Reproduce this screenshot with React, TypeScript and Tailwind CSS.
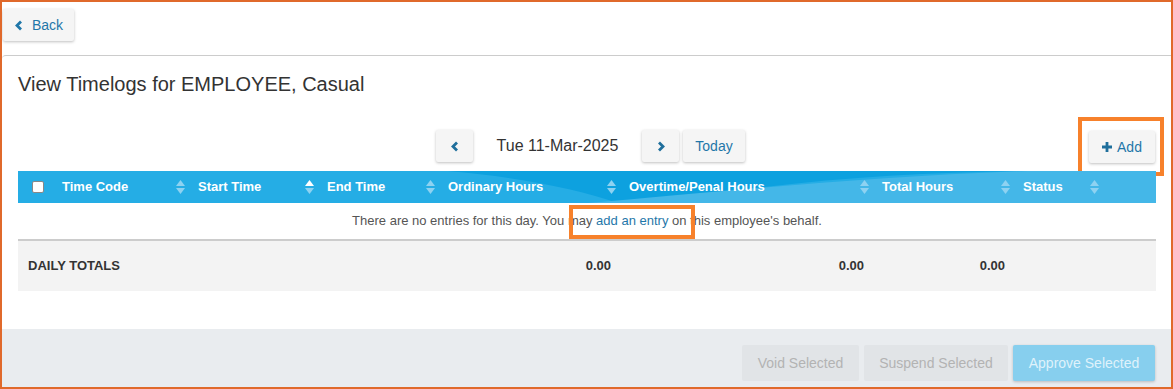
import React from 'react'

const font = "font-['Liberation_Sans',Arial,sans-serif]"

function Chevron({ dir, className }: { dir: 'left' | 'right'; className?: string }) {
  return (
    <svg width="8" height="11" viewBox="0 0 8 11" className={className}>
      <polyline
        points={dir === 'left' ? '6,1.5 2,5.5 6,9.5' : '2,1.5 6,5.5 2,9.5'}
        fill="none"
        stroke="currentColor"
        strokeWidth="2.8"
        strokeLinejoin="miter"
      />
    </svg>
  )
}

function SortIcon({ active }: { active?: boolean }) {
  return (
    <svg width="9" height="14" viewBox="0 0 9 14">
      <path d="M4.5 0 L9 6 H0 Z" fill={active ? '#ffffff' : '#8ed2f1'} />
      <path d="M4.5 14 L9 8 H0 Z" fill="#8ed2f1" />
    </svg>
  )
}

const columns = [
  { label: 'Time Code', w: 'w-[136px]' },
  { label: 'Start Time', w: 'w-[129px]', active: true },
  { label: 'End Time', w: 'w-[121px]' },
  { label: 'Ordinary Hours', w: 'w-[181px]' },
  { label: 'Overtime/Penal Hours', w: 'w-[253px]' },
  { label: 'Total Hours', w: 'w-[141px]' },
  { label: 'Status', w: 'w-[89px]' },
]

export default function App() {
  return (
    <div className={`flex h-[389px] w-[1173px] flex-col overflow-hidden border-2 border-[#e0692b] bg-white ${font}`}>
      {/* top bar */}
      <div className="h-[53px] shrink-0 pl-[1px] pt-[7px]">
        <button className="flex h-[32px] w-[71px] items-center gap-[9px] rounded-[2px] bg-[#f5f5f5] pl-[12px] text-[14px] text-[#1f77a9] shadow-[0_1px_3px_rgba(0,0,0,0.25)]">
          <Chevron dir="left" />
          Back
        </button>
      </div>

      <div className="h-[274px] shrink-0 rounded-tl-[4px] border-t border-[#cccccc] px-[16px] pt-[14px]">
        <h1 className="h-[28px] text-[20px] leading-[28px] text-[#333333]">View Timelogs for EMPLOYEE, Casual</h1>

        <div className="mt-[32px] flex h-[33px] items-start">
          <div className="ml-[418px] flex items-center">
            <button className="flex h-[32px] w-[37px] items-center justify-center rounded-[2px] bg-[#f5f5f5] text-[#1f6f9c] shadow-[0_1px_3px_rgba(0,0,0,0.25)]">
              <Chevron dir="left" />
            </button>
            <span className="w-[169px] text-center text-[16px] text-[#333333]">Tue 11-Mar-2025</span>
            <button className="flex h-[32px] w-[37px] items-center justify-center rounded-[2px] bg-[#f5f5f5] text-[#1f6f9c] shadow-[0_1px_3px_rgba(0,0,0,0.25)]">
              <Chevron dir="right" />
            </button>
            <button className="ml-[4px] h-[32px] w-[62px] rounded-[2px] bg-[#f5f5f5] text-[14px] text-[#1f77a9] shadow-[0_1px_3px_rgba(0,0,0,0.25)]">
              Today
            </button>
          </div>
          <div className="relative ml-auto mt-[1px]">
            <button className="flex h-[32px] w-[66px] items-center justify-center gap-[5px] rounded-[2px] bg-[#f5f5f5] text-[14px] text-[#1f77a9] shadow-[0_1px_3px_rgba(0,0,0,0.25)]">
              <svg width="10" height="10" viewBox="0 0 10 10">
                <path d="M3.6 0 H6.4 V3.6 H10 V6.4 H6.4 V10 H3.6 V6.4 H0 V3.6 H3.6 Z" fill="#1f6f9c" />
              </svg>
              Add
            </button>
            <div className="pointer-events-none absolute -bottom-[13px] -left-[11px] -right-[9px] -top-[14px] border-4 border-[#f7812b]" />
          </div>
        </div>

        {/* table */}
        <div className="mt-[8px] w-[1138px]">
          <div className="relative flex h-[32px] items-center overflow-hidden bg-[#25ade5] text-[13px] font-bold text-white">
            <svg viewBox="0 0 1138 32" preserveAspectRatio="none" className="absolute inset-0 h-full w-full">
              <path d="M430 0 H1000 C 880 2, 760 10, 640 32 H 600 C 560 18, 500 6, 430 0 Z" fill="#0da1df" />
              <path d="M570 32 C 690 22, 840 6, 1010 0 H1138 V32 Z" fill="#44b7e8" />
            </svg>
            <div className="relative flex w-[36px] justify-end pr-[10px]">
              <span className="block h-[12px] w-[12px] rounded-[2px] border border-[#888888] bg-white" />
            </div>
            {columns.map((c) => (
              <div key={c.label} className={`relative flex items-center justify-between pl-[8px] pr-[5px] ${c.w}`}>
                <span>{c.label}</span>
                <SortIcon active={c.active} />
              </div>
            ))}
          </div>

          <div className="flex h-[36px] items-center justify-center text-[13px] text-[#555555]">
            <span>
              There are no entries for this day. You may{' '}
              <span className="relative text-[#1f77a9]">
                add an entry
                <span className="pointer-events-none absolute -bottom-[11px] -left-[27px] -right-[27px] -top-[8px] border-4 border-[#f7812b]" />
              </span>{' '}
              on this employee&apos;s behalf.
            </span>
          </div>

          <div className="flex h-[52px] items-center border-t-2 border-[#cccccc] bg-[#f3f3f3] text-[13px] font-bold text-[#333333]">
            <div className="w-[422px] pl-[10px]">DAILY TOTALS</div>
            <div className="w-[181px] pr-[10px] text-right">0.00</div>
            <div className="w-[253px] pr-[10px] text-right">0.00</div>
            <div className="w-[141px] pr-[10px] text-right">0.00</div>
          </div>
        </div>
      </div>

      {/* footer */}
      <div className="flex flex-1 items-start justify-end gap-[5px] bg-[#e9ecef] pr-[16px] pt-[16px] text-[14px]">
        <button className="h-[36px] w-[117px] rounded-[2px] bg-[#e1e4e7] text-[#b3b3b3]">Void Selected</button>
        <button className="h-[36px] w-[144px] rounded-[2px] bg-[#e1e4e7] text-[#b3b3b3]">Suspend Selected</button>
        <button className="h-[36px] w-[142px] rounded-[2px] bg-[#87cfee] text-[#dff2fb] shadow-[0_1px_3px_rgba(0,0,0,0.2)]">
          Approve Selected
        </button>
      </div>
    </div>
  )
}
